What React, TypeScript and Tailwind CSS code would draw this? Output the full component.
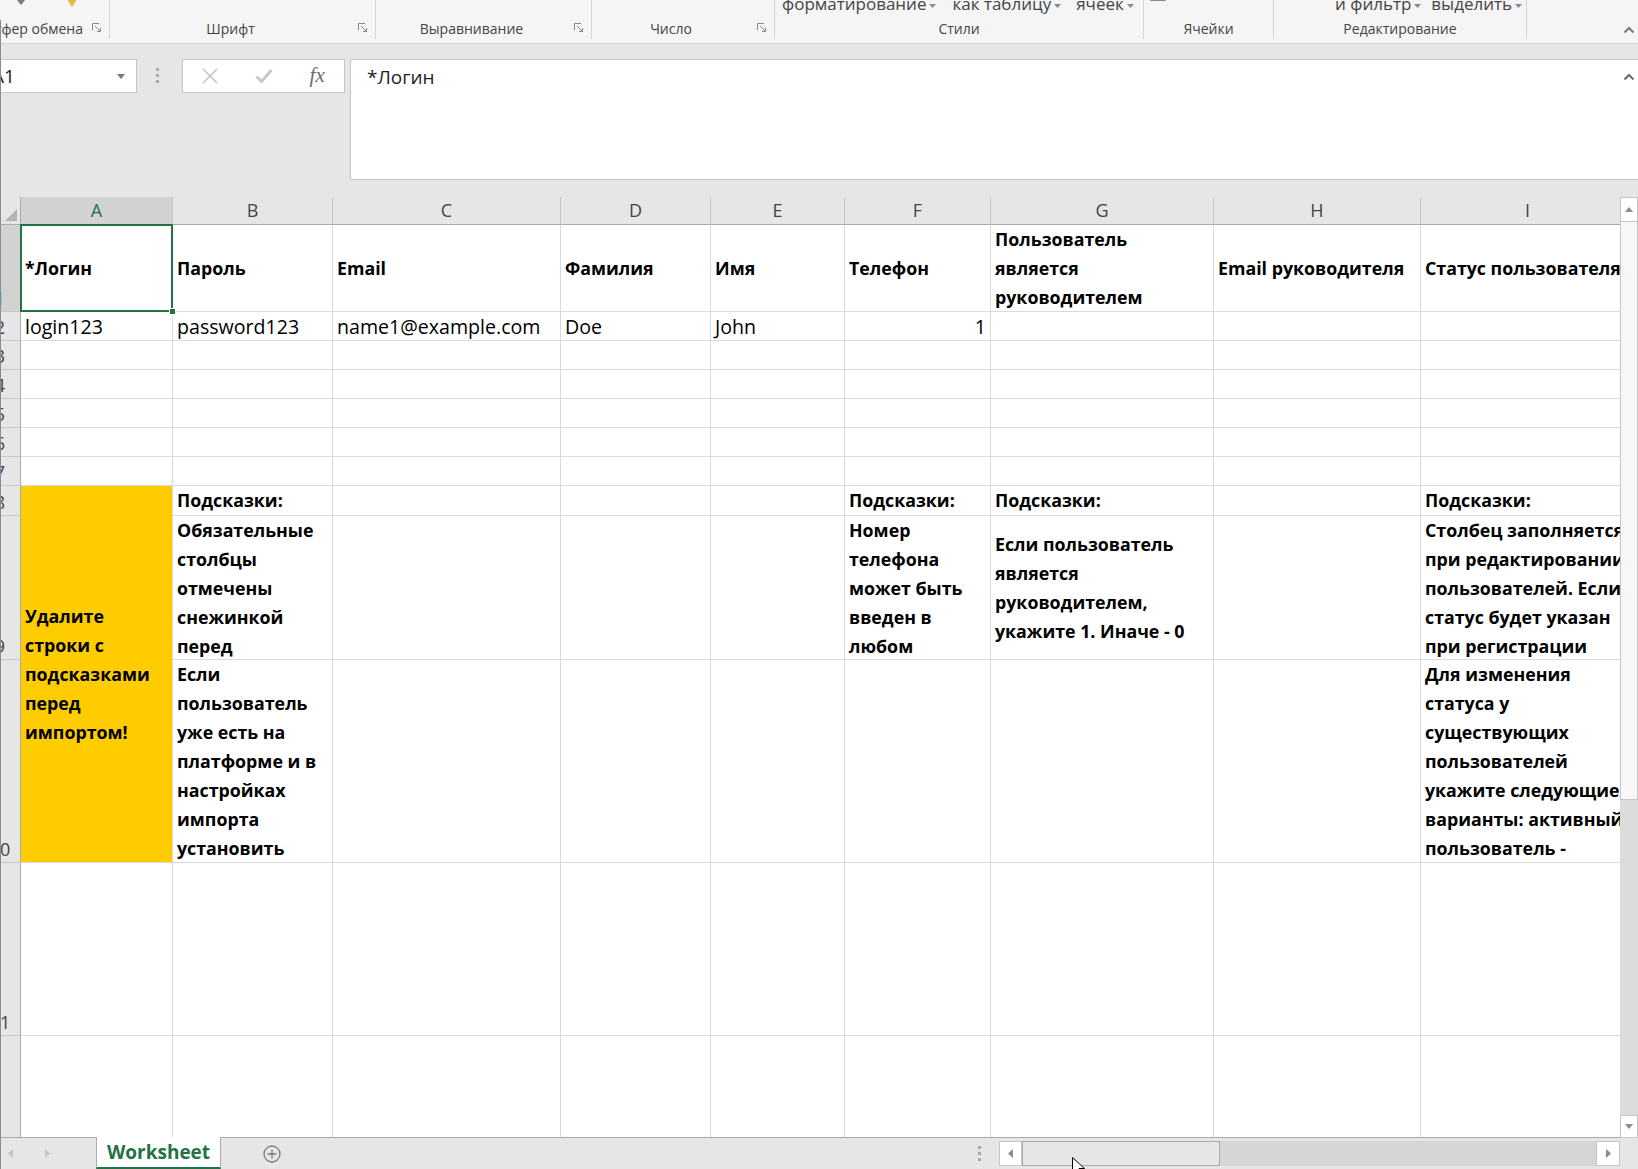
import React from 'react';

type Cell = {
  lines: string[];
  bold?: boolean;
  right?: boolean;
  top?: boolean;
};

const COLS = ['A', 'B', 'C', 'D', 'E', 'F', 'G', 'H', 'I'];
const ROWS = [1, 2, 3, 4, 5, 6, 7, 8, 9, 10, 11, 12];

const cells: Record<string, Cell> = {
  A1: { lines: ['*Логин'], bold: true },
  B1: { lines: ['Пароль'], bold: true },
  C1: { lines: ['Email'], bold: true },
  D1: { lines: ['Фамилия'], bold: true },
  E1: { lines: ['Имя'], bold: true },
  F1: { lines: ['Телефон'], bold: true },
  G1: { lines: ['Пользователь', 'является', 'руководителем'], bold: true },
  H1: { lines: ['Email руководителя'], bold: true },
  I1: { lines: ['Статус пользователя'], bold: true },
  A2: { lines: ['login123'] },
  B2: { lines: ['password123'] },
  C2: { lines: ['name1@example.com'] },
  D2: { lines: ['Doe'] },
  E2: { lines: ['John'] },
  F2: { lines: ['1'], right: true },
  B8: { lines: ['Подсказки:'], bold: true },
  F8: { lines: ['Подсказки:'], bold: true },
  G8: { lines: ['Подсказки:'], bold: true },
  I8: { lines: ['Подсказки:'], bold: true },
  B9: {
    lines: ['Обязательные', 'столбцы', 'отмечены', 'снежинкой', 'перед'],
    bold: true,
    top: true,
  },
  F9: {
    lines: ['Номер', 'телефона', 'может быть', 'введен в', 'любом'],
    bold: true,
    top: true,
  },
  G9: {
    lines: ['Если пользователь', 'является', 'руководителем,', 'укажите 1. Иначе - 0'],
    bold: true,
  },
  I9: {
    lines: [
      'Столбец заполняется',
      'при редактировании',
      'пользователей. Если',
      'статус будет указан',
      'при регистрации',
    ],
    bold: true,
    top: true,
  },
  B10: {
    lines: [
      'Если',
      'пользователь',
      'уже есть на',
      'платформе и в',
      'настройках',
      'импорта',
      'установить',
    ],
    bold: true,
    top: true,
  },
  I10: {
    lines: [
      'Для изменения',
      'статуса у',
      'существующих',
      'пользователей',
      'укажите следующие',
      'варианты: активный',
      'пользователь -',
    ],
    bold: true,
    top: true,
  },
};

const Launcher = () => (
  <svg width="10" height="10" viewBox="0 0 10 10" fill="none" stroke="#8a8a8a" strokeWidth="1">
    <path d="M0.5 7V0.5H7" />
    <path d="M3 3L8.5 8.5" />
    <path d="M8.5 5V8.5H5" />
  </svg>
);

const Caret = ({ color = '#6b6b6b' }: { color?: string }) => (
  <svg width="12" height="8" viewBox="0 0 12 8" fill="none" stroke={color} strokeWidth="2">
    <path d="M1.5 6.5L6 2L10.5 6.5" />
  </svg>
);

const DropTri = () => (
  <svg width="7" height="4" viewBox="0 0 7 4" className="inline-block ml-[3px] align-middle">
    <path d="M0 0H7L3.5 4Z" fill="#8a8a8a" />
  </svg>
);

const RibbonGroup = ({
  label,
  width,
  launcher,
  labelEnd,
  children,
}: {
  label: string;
  width: string;
  launcher?: boolean;
  labelEnd?: boolean;
  children?: React.ReactNode;
}) => (
  <div className={`${width} shrink-0 flex flex-col justify-between border-r border-[#d5d5d5] mb-[4px]`}>
    <div className="h-[22px] -mt-[7px] flex items-center whitespace-nowrap text-[17px] text-[#444]">
      {children}
    </div>
    <div className="h-[22px] flex items-center">
      <div
        className={`flex-1 min-w-0 whitespace-nowrap text-[14px] text-[#444] flex ${
          labelEnd ? 'justify-end pr-[2px]' : 'justify-center'
        }`}
      >
        {label}
      </div>
      {launcher && (
        <div className="w-[24px] shrink-0 flex justify-center items-center">
          <Launcher />
        </div>
      )}
    </div>
  </div>
);

const Ribbon = () => (
  <div className="h-[44px] shrink-0 flex bg-[#f5f5f5] border-b border-[#d4d4d4]">
    <RibbonGroup label="Буфер обмена" width="w-[110px]" launcher labelEnd>
      <svg width="8" height="5" viewBox="0 0 8 5" className="ml-[17px] -mt-[4px]">
        <path d="M0 0H8L4 5Z" fill="#7a7a7a" />
      </svg>
      <svg width="14" height="11" viewBox="0 0 14 11" className="ml-[40px] -mt-[6px]">
        <path d="M0 0H14L7 11Z" fill="#e9b44c" />
      </svg>
    </RibbonGroup>
    <RibbonGroup label="Шрифт" width="w-[266px]" launcher>
      <div className="ml-[5px] -mt-[17px] w-[29px] h-[3px] bg-[#c8c8c8]" />
    </RibbonGroup>
    <RibbonGroup label="Выравнивание" width="w-[216px]" launcher />
    <RibbonGroup label="Число" width="w-[183px]" launcher />
    <RibbonGroup label="Стили" width="w-[369px]">
      <span className="ml-[7px]">
        форматирование
        <DropTri />
      </span>
      <span className="ml-[16px]">
        как таблицу
        <DropTri />
      </span>
      <span className="ml-[15px]">
        ячеек
        <DropTri />
      </span>
    </RibbonGroup>
    <RibbonGroup label="Ячейки" width="w-[130px]">
      <svg width="16" height="8" viewBox="0 0 16 8" className="ml-[6px] -mt-[12px]">
        <path d="M0.5 0V6.5H15.5V0M5.5 0V6.5M10.5 0V6.5" fill="none" stroke="#8a8a8a" />
      </svg>
    </RibbonGroup>
    <RibbonGroup label="Редактирование" width="w-[253px]">
      <div className="ml-[16px] -mt-[17px] w-[12px] h-[3px] bg-[#9a9a9a]" />
      <span className="ml-[33px]">
        и фильтр
        <DropTri />
      </span>
      <span className="ml-[10px]">
        выделить
        <DropTri />
      </span>
    </RibbonGroup>
    <div className="flex-1 flex items-end justify-end pb-[9px] pr-[3px]">
      <Caret color="#777" />
    </div>
  </div>
);

const FormulaArea = () => (
  <div className="h-[153px] shrink-0 bg-[#e6e6e6] flex items-start pt-[15px]">
    <div className="-ml-[24px] w-[161px] h-[34px] shrink-0 bg-white border border-[#c6c6c6] flex items-center justify-between pl-[15px] pr-[11px] text-[19px] text-[#222]">
      <span>A1</span>
      <svg width="8" height="5" viewBox="0 0 8 5">
        <path d="M0 0H8L4 5Z" fill="#7a7a7a" />
      </svg>
    </div>
    <div className="ml-[19px] mt-[9px] flex flex-col gap-[3px]">
      <div className="w-[3px] h-[3px] bg-[#a8a8a8]" />
      <div className="w-[3px] h-[3px] bg-[#a8a8a8]" />
      <div className="w-[3px] h-[3px] bg-[#a8a8a8]" />
    </div>
    <div className="ml-[23px] w-[163px] h-[34px] shrink-0 bg-white border border-[#c6c6c6] flex items-center">
      <div className="w-[54px] flex justify-center">
        <svg width="16" height="16" viewBox="0 0 16 16" stroke="#c4c4c4" strokeWidth="1.6">
          <path d="M1 1L15 15M15 1L1 15" />
        </svg>
      </div>
      <div className="w-[54px] flex justify-center">
        <svg width="18" height="16" viewBox="0 0 18 16" fill="none" stroke="#c8c8c8" strokeWidth="3">
          <path d="M1.5 8.5L6.5 13.5L16.5 2" />
        </svg>
      </div>
      <div className="w-[54px] flex justify-center font-['Liberation_Serif',serif] italic text-[21px] text-[#6e6e6e]">
        fx
      </div>
    </div>
    <div className="ml-[5px] flex-1 h-[121px] bg-white border border-r-0 border-[#c6c6c6] flex justify-between items-start">
      <div className="pl-[16px] pt-[3px] leading-[29px] text-[19px] text-[#222]">*Логин</div>
      <div className="mt-[13px] mr-[3px]">
        <Caret />
      </div>
    </div>
  </div>
);

const DataCell = ({ id }: { id: string }) => {
  const cell = cells[id];
  const selected = id === 'A1';
  return (
    <div
      className={`border-r border-b border-[#dadada] px-[4px] flex flex-col ${
        cell?.top ? 'justify-start' : 'justify-center'
      } ${selected ? 'relative z-10' : 'overflow-hidden'}`}
    >
      {cell?.lines.map((line) => (
        <div
          key={line}
          className={`whitespace-nowrap leading-[29px] text-black ${
            cell.bold ? 'font-bold text-[17.8px]' : 'text-[19.6px]'
          } ${cell.right ? 'text-right' : ''}`}
        >
          {line}
        </div>
      ))}
      {selected && (
        <>
          <div className="absolute -left-[1px] -top-[1px] -right-[1px] -bottom-[1px] border-2 border-[#217346]" />
          <div className="absolute -right-[4px] -bottom-[4px] w-[7px] h-[7px] bg-[#217346] border border-white" />
        </>
      )}
    </div>
  );
};

const Sheet = () => (
  <div className="w-[1620px] overflow-hidden border-b border-[#ababab]">
    <div className="-ml-[20px] grid grid-cols-[41px_152px_160px_228px_150px_134px_146px_223px_207px_214px] grid-rows-[28px_87px_29px_29px_29px_29px_29px_29px_30px_144px_203px_173px_173px]">
      <div className="bg-[#e6e6e6] border-r border-b border-[#ababab] flex justify-end items-end pr-[3px] pb-[3px]">
        <svg width="12" height="12" viewBox="0 0 12 12">
          <path d="M12 0V12H0Z" fill="#b4b4b4" />
        </svg>
      </div>
      {COLS.map((c) => (
        <div
          key={c}
          className={`border-r border-b border-r-[#c6c6c6] flex items-center justify-center text-[18px] ${
            c === 'A'
              ? 'bg-[#d2d2d2] text-[#217346] border-b-[#217346]'
              : 'bg-[#e6e6e6] text-[#444] border-b-[#ababab]'
          }`}
        >
          {c}
        </div>
      ))}
      {ROWS.map((r) => (
        <React.Fragment key={r}>
          <div
            className={`border-r border-b border-r-[#ababab] border-b-[#c8c8c8] flex items-end justify-center leading-[26px] text-[18px] ${
              r === 1 ? 'bg-[#d2d2d2] text-[#217346]' : 'bg-[#e6e6e6] text-[#444]'
            }`}
          >
            {r}
          </div>
          {COLS.map((c) => {
            const id = `${c}${r}`;
            if (c === 'A' && (r === 9 || r === 10)) return null;
            if (id === 'A8') {
              return (
                <div
                  key={id}
                  className="row-span-3 bg-[#ffcc00] border-r border-b border-[#dadada] px-[4px] flex flex-col justify-center"
                >
                  {['Удалите', 'строки с', 'подсказками', 'перед', 'импортом!'].map((line) => (
                    <div key={line} className="whitespace-nowrap leading-[29px] text-[17.8px] font-bold text-black">
                      {line}
                    </div>
                  ))}
                </div>
              );
            }
            return <DataCell key={id} id={id} />;
          })}
        </React.Fragment>
      ))}
    </div>
  </div>
);

const VScroll = () => (
  <div className="w-[18px] shrink-0 flex flex-col bg-[#dcdcdc]">
    <div className="h-[25px] bg-white border border-[#c6c6c6] flex items-center justify-center">
      <svg width="8" height="5" viewBox="0 0 8 5">
        <path d="M0 5H8L4 0Z" fill="#8a8a8a" />
      </svg>
    </div>
    <div className="h-[578px] bg-[#f7f7f7] border border-t-0 border-[#c6c6c6]" />
    <div className="flex-1" />
    <div className="h-[23px] bg-white border border-[#c6c6c6] flex items-center justify-center">
      <svg width="8" height="5" viewBox="0 0 8 5">
        <path d="M0 0H8L4 5Z" fill="#8a8a8a" />
      </svg>
    </div>
  </div>
);

const BottomBar = () => (
  <div className="h-[31px] shrink-0 bg-[#e6e6e6] flex items-stretch">
    <div className="w-[96px] flex items-center pl-[8px]">
      <svg width="5" height="9" viewBox="0 0 5 9">
        <path d="M5 0V9L0 4.5Z" fill="#c4c4c4" />
      </svg>
      <svg width="5" height="9" viewBox="0 0 5 9" className="ml-[32px]">
        <path d="M0 0V9L5 4.5Z" fill="#c4c4c4" />
      </svg>
    </div>
    <div className="w-[125px] -mt-[1px] bg-white border-x border-[#ababab] border-b-2 border-b-[#217346] flex items-center justify-center text-[19px] font-bold text-[#217346]">
      Worksheet
    </div>
    <div className="ml-[42px] flex items-center">
      <svg width="18" height="18" viewBox="0 0 18 18" fill="none" stroke="#7a7a7a" strokeWidth="1.3">
        <circle cx="9" cy="9" r="8" />
        <path d="M9 4.5V13.5M4.5 9H13.5" />
      </svg>
    </div>
    <div className="flex-1" />
    <div className="flex flex-col justify-center gap-[3px]">
      <div className="w-[3px] h-[3px] bg-[#a8a8a8]" />
      <div className="w-[3px] h-[3px] bg-[#a8a8a8]" />
      <div className="w-[3px] h-[3px] bg-[#a8a8a8]" />
    </div>
    <div className="ml-[18px] w-[621px] flex items-center">
      <div className="h-[25px] flex w-full">
        <div className="w-[23px] bg-white border border-[#c6c6c6] flex items-center justify-center">
          <svg width="5" height="9" viewBox="0 0 5 9">
            <path d="M5 0V9L0 4.5Z" fill="#8a8a8a" />
          </svg>
        </div>
        <div className="w-[198px] bg-[#e6e6e6] border border-[#ababab]" />
        <div className="flex-1 bg-[#d6d6d6]" />
        <div className="w-[24px] bg-white border border-[#c6c6c6] flex items-center justify-center">
          <svg width="5" height="9" viewBox="0 0 5 9">
            <path d="M0 0V9L5 4.5Z" fill="#8a8a8a" />
          </svg>
        </div>
      </div>
    </div>
    <div className="w-[18px]" />
  </div>
);

export default function App() {
  return (
    <div className="relative w-[1638px] h-[1169px] overflow-hidden flex flex-col bg-white font-['Open_Sans',sans-serif]">
      <Ribbon />
      <FormulaArea />
      <div className="h-[941px] shrink-0 flex">
        <Sheet />
        <VScroll />
      </div>
      <BottomBar />
      <div className="absolute left-0 top-[20px] bottom-0 w-[1px] bg-[#8c8c8c]" />
      <svg
        width="13"
        height="20"
        viewBox="0 0 13 20"
        className="absolute left-[1072px] top-[1157px]"
      >
        <path d="M0.5 0.5V16.5L4.5 12.5L7.5 19L10 18L7 11.5H12.5Z" fill="white" stroke="black" />
      </svg>
    </div>
  );
}
